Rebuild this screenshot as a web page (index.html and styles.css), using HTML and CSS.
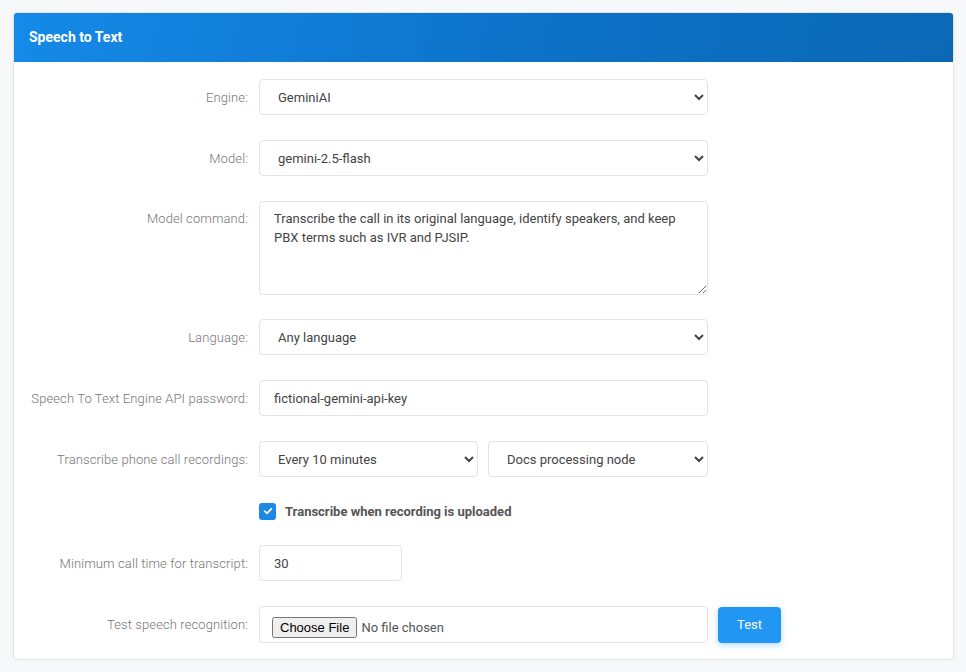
FILE: index.html
```html
<!DOCTYPE html>
<html>
<head>
<meta charset="utf-8">
<link rel="stylesheet" href="styles.css">
</head>
<body>
<div class="card">
  <div class="card-header">Speech to Text</div>
  <div class="card-body">
    <div class="row">
      <label class="lbl">Engine:</label>
      <select class="ctl"><option>GeminiAI</option></select>
    </div>
    <div class="row">
      <label class="lbl">Model:</label>
      <select class="ctl"><option>gemini-2.5-flash</option></select>
    </div>
    <div class="row top">
      <label class="lbl lbl-top">Model command:</label>
      <textarea class="ctl area">Transcribe the call in its original language, identify speakers, and keep PBX terms such as IVR and PJSIP.</textarea>
    </div>
    <div class="row">
      <label class="lbl">Language:</label>
      <select class="ctl"><option>Any language</option></select>
    </div>
    <div class="row">
      <label class="lbl">Speech To Text Engine API password:</label>
      <input class="ctl txt" type="text" value="fictional-gemini-api-key">
    </div>
    <div class="row">
      <label class="lbl">Transcribe phone call recordings:</label>
      <div class="pair">
        <select class="ctl"><option>Every 10 minutes</option></select>
        <select class="ctl"><option>Docs processing node</option></select>
      </div>
    </div>
    <div class="row check-row">
      <span></span>
      <label class="check">
        <span class="box"><svg width="10" height="10" viewBox="0 0 10 10"><path d="M1.8 5.2 L4 7.3 L8.3 2.8" fill="none" stroke="#fff" stroke-width="1.8" stroke-linecap="round" stroke-linejoin="round"/></svg></span>
        Transcribe when recording is uploaded
      </label>
    </div>
    <div class="row">
      <label class="lbl">Minimum call time for transcript:</label>
      <input class="ctl txt short" type="text" value="30">
    </div>
    <div class="row last">
      <label class="lbl">Test speech recognition:</label>
      <div class="file-wrap">
        <div class="ctl file"><input type="file"></div>
        <button class="btn">Test</button>
      </div>
    </div>
  </div>
</div>
</body>
</html>
```
FILE: styles.css
```css
html, body { margin: 0; padding: 0; }
body {
  background: #f7f8fa;
  font-family: Roboto, "Liberation Sans", Arial, sans-serif;
  font-size: 13px;
  padding: 12px 12px 0 13px;
}
.card {
  width: 939px;
  background: #fff;
  border: 1px solid #e3e5e8;
  border-radius: 4px;
  box-shadow: 0 1px 4px rgba(0,0,0,0.04);
  overflow: hidden;
}
.card-header {
  height: 49px;
  line-height: 49px;
  padding-left: 15px;
  color: #fff;
  font-weight: 700;
  font-size: 14px;
  background: linear-gradient(100deg, #158ae8 0%, #0d72c8 55%, #0b68b5 100%);
}
.card-body {
  padding: 17px 0 16px 0;
}
.row {
  display: grid;
  grid-template-columns: 234px 449px;
  column-gap: 11px;
  align-items: center;
  margin-bottom: 25px;
}
.row.top { align-items: start; margin-bottom: 24px; }
.row.last { margin-bottom: 0; grid-template-columns: 234px auto; }
.lbl {
  text-align: right;
  color: #767676;
  font-weight: 300;
  font-size: 13px;
  letter-spacing: 0.1px;
}
.lbl-top { padding-top: 10px; }
.ctl {
  box-sizing: border-box;
  height: 36px;
  border: 1px solid #e2e4e7;
  border-radius: 4px;
  background: #fff;
  color: #444;
  font-family: Roboto, "Liberation Sans", Arial, sans-serif;
  font-size: 13px;
  padding: 0 10px 0 14px;
  width: 100%;
  margin: 0;
  outline: none;
}
.area {
  height: 94px;
  padding: 7px 14px;
  line-height: 19px;
  resize: vertical;
}
.txt { padding: 0 14px; }
.short { width: 143px; }
.pair {
  display: grid;
  grid-template-columns: 219px 220px;
  column-gap: 10px;
}
.check-row { margin-bottom: 25px; }
.check {
  display: flex;
  align-items: center;
  gap: 9px;
  font-weight: 700;
  color: #555;
  font-size: 13px;
  height: 18px;
}
.box {
  width: 17px;
  height: 17px;
  border-radius: 3px;
  background: #1e88e5;
  display: flex;
  align-items: center;
  justify-content: center;
}
.file-wrap {
  display: flex;
  align-items: center;
  gap: 10px;
}
.file {
  width: 449px;
  height: 37px;
  display: flex;
  align-items: flex-end;
  padding: 0 12px 4px 12px;
}
.file input {
  font-family: Roboto, "Liberation Sans", Arial, sans-serif;
  font-size: 13px;
  color: #555;
}
.btn {
  width: 63px;
  height: 36px;
  border: none;
  border-radius: 4px;
  background: #2196f3;
  color: #fff;
  font-family: Roboto, "Liberation Sans", Arial, sans-serif;
  font-size: 13px;
  box-shadow: 0 2px 6px rgba(33,150,243,0.35);
}
```
